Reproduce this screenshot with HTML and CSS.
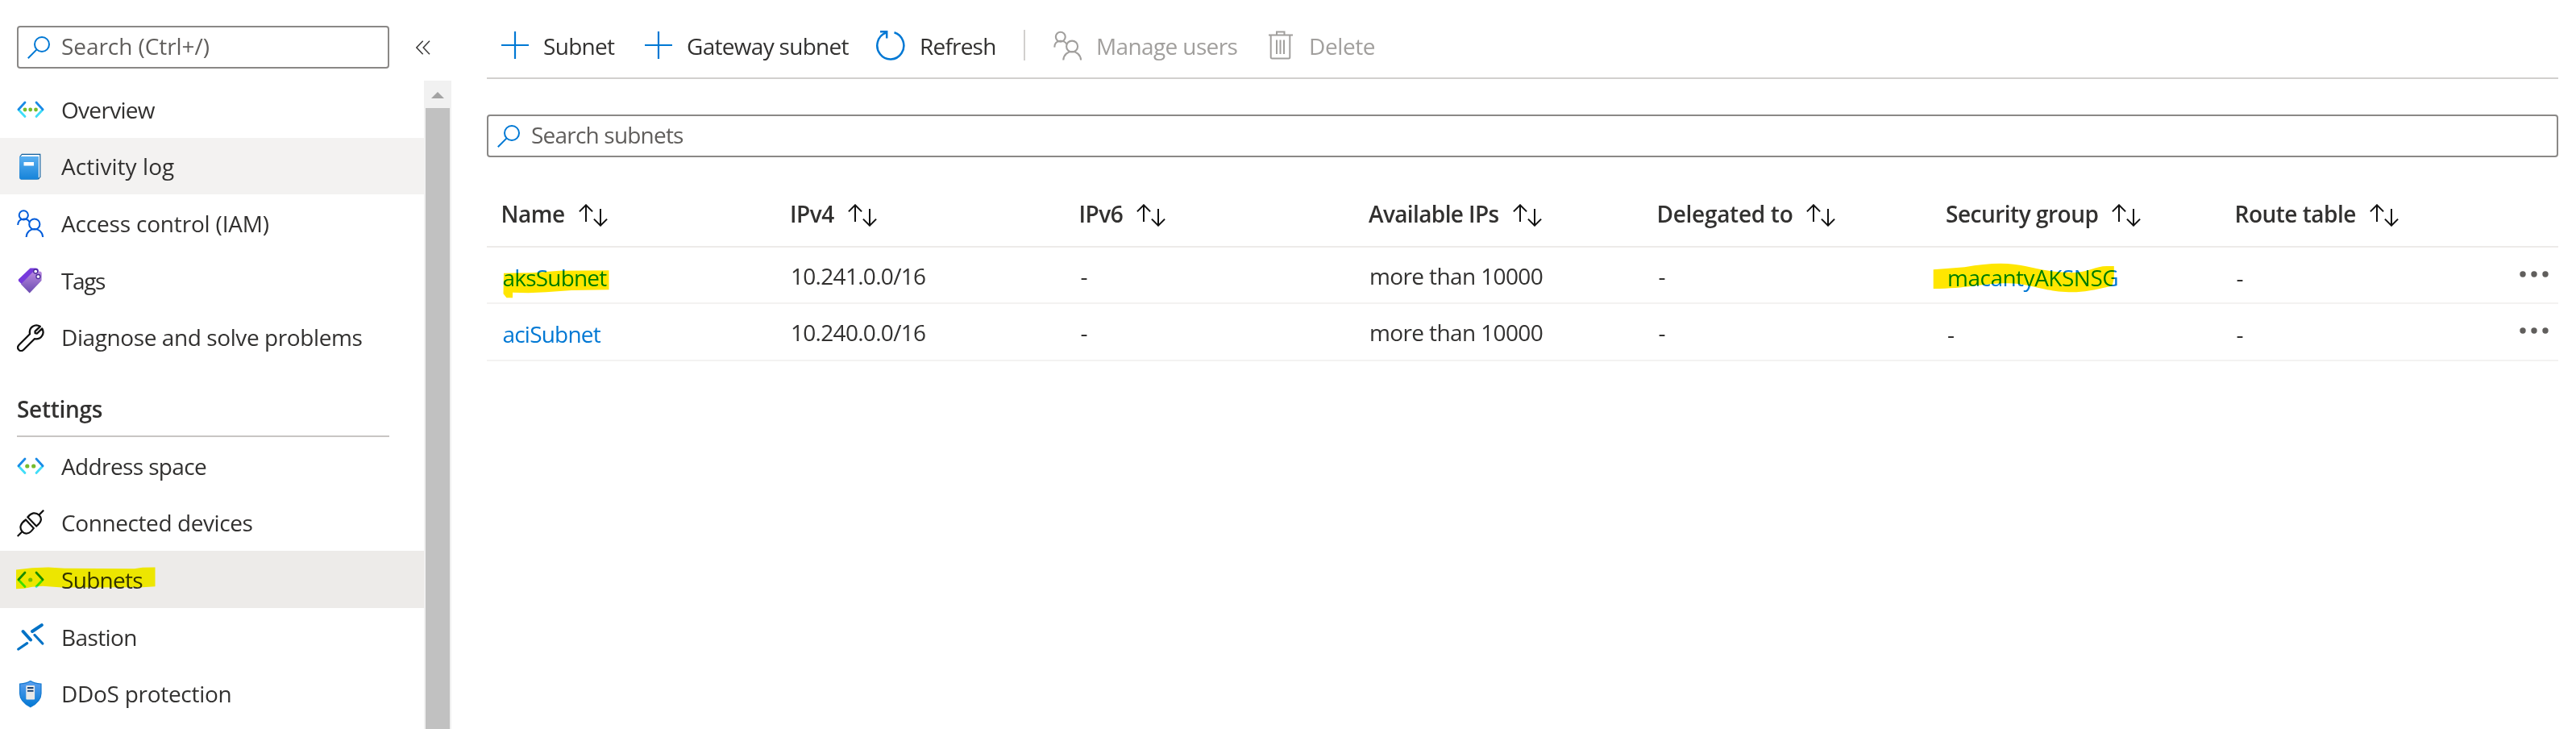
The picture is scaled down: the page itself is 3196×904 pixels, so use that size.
FILE: index.html
```
<!DOCTYPE html>
<html lang="en">
<head>
<meta charset="utf-8">
<title>Subnets</title>
<link rel="stylesheet" href="styles.css">
</head>
<body>
<svg class="defs" width="0" height="0">
  <defs>
    <linearGradient id="g-book" x1="0" y1="0" x2="0" y2="1"><stop offset="0" stop-color="#5ab0f2"/><stop offset="1" stop-color="#1683d9"/></linearGradient>
    <linearGradient id="g-tag" x1="0" y1="0" x2="0" y2="1"><stop offset="0" stop-color="#b98ae0"/><stop offset="1" stop-color="#6b4bb0"/></linearGradient>
    <linearGradient id="g-shield" x1="0" y1="0" x2="0" y2="1"><stop offset="0" stop-color="#5ea0ef"/><stop offset="1" stop-color="#0078d4"/></linearGradient>
    <symbol id="i-search" viewBox="0 0 28 28"><g fill="none" stroke="#0078d4" stroke-width="2"><circle cx="18" cy="10" r="9"/><path d="M11.6 16.4 .8 27.2"/></g></symbol>
    <symbol id="i-people" viewBox="0 0 34 34"><g fill="none" stroke="currentColor" stroke-width="2"><circle cx="8.3" cy="6.8" r="5.6"/><circle cx="21.8" cy="18" r="6.6"/><path d="M1.2 19C1.4 9.900 13 9.500 15.800 15.800M11.600 34C12.400 20.800 31.200 20.800 32.200 34"/></g></symbol>
    <symbol id="i-plus" viewBox="0 0 34 34"><path d="M17 0V34M0 17H34" fill="none" stroke="#0078d4" stroke-width="2.2"/></symbol>
    <symbol id="i-sort" viewBox="0 0 36 28"><g fill="none" stroke="#111" stroke-width="2"><path d="M9 22V1.500M.9 9.400 9 1.300l8.100 8.100M27 6v20.500M18.900 18.600 27 26.700l8.100-8.100"/></g></symbol>
    <symbol id="i-dots" viewBox="0 0 36 8"><g fill="#605e5c"><circle cx="4" cy="4" r="3.700"/><circle cx="18" cy="4" r="3.700"/><circle cx="32" cy="4" r="3.700"/></g></symbol>
    <symbol id="i-chev" viewBox="0 0 34 34"><g fill="none" stroke-width="2.800" stroke-linecap="round"><path stroke="#40ddf8" d="M2 17 10 25.500M32 17 24 25.500"/><path stroke="#1a8ae6" d="M10 8 2 16.700M24 8 32 16.700"/></g></symbol>
  </defs>
</svg>
<div class="app">
  <aside class="side">
    <div class="side-top">
      <div class="search search-menu"><svg width="28" height="28"><use href="#i-search"/></svg><span class="tr-0">Search (Ctrl+/)</span></div>
      <svg class="collapse" width="18" height="18" viewBox="0 0 18 18"><path d="M8.700.7.900 9l7.800 8.300M17 .7 9.200 9l7.800 8.300" fill="none" stroke="#3b3a39" stroke-width="1.500"/></svg>
    </div>
    <div class="side-body">
      <nav class="nav">
        <a class="item"><svg class="ic" viewBox="0 0 34 34"><use href="#i-chev"/><g fill="#76bc2d"><circle cx="10" cy="17" r="2.400"/><circle cx="16.700" cy="17" r="2.400"/><circle cx="23.500" cy="17" r="2.400"/></g></svg><span class="tr-7">Overview</span></a>
        <a class="item hover"><svg class="ic" viewBox="0 0 34 34"><path d="M6 .700H29.400V29.500L27 32.500H5L3.300 30V4Z" fill="#0f5f9e"/><path d="M6.500 2H28.200V29.500L26.500 31V4H4.500Z" fill="#fff"/><path d="M3.200 4H26.600V30.500a2 2 0 0 1-2 2H5a1.800 1.800 0 0 1-1.800-1.800Z" fill="url(#g-book)"/><path d="M8.500 11h12.500v4.500H8.500Z" fill="#fff"/></svg><span class="tr-up">Activity log</span></a>
        <a class="item"><svg class="ic people"><use href="#i-people"/></svg><span class="tr-1">Access control (IAM)</span></a>
        <a class="item"><svg class="ic" viewBox="0 0 34 34"><path d="M16.500 1.500H23a4 4 0 0 1 4 4V12L7.500 23 2 17.500 1.800 15.500Z" fill="#773adc"/><path d="M19.500 6.500 28 5.500a2.500 2.500 0 0 1 2.800 2.500L30.500 17 15.700 32.500 5 21.500Z" fill="url(#g-tag)"/><g fill="#fff" stroke="#4b2a9a" stroke-width="1.300"><circle cx="23.200" cy="5.500" r="2.500"/><circle cx="26.400" cy="12" r="2.500"/></g></svg><span class="tags">Tags</span></a>
        <a class="item"><svg class="ic" viewBox="0 0 34 34"><path d="M28.800 2.800C23 -.700 14.500 3 16 12.200L2.500 25.700C-1.500 30.500 4.500 35.800 8.500 31.500L21.800 18.200C30 19.500 35 11.500 31.200 5.400L25 11.500 22.600 11.200 22.500 8.900Z" fill="none" stroke="#111" stroke-width="2.300" stroke-linejoin="round"/></svg><span class="tr-4">Diagnose and solve problems</span></a>
        <h2 class="group"><span class="tr-3">Settings</span></h2>
        <a class="item"><svg class="ic" viewBox="0 0 34 34"><use href="#i-chev"/><g fill="#76bc2d"><circle cx="12.800" cy="17" r="2.600"/><circle cx="20.700" cy="17" r="2.600"/></g></svg><span class="tr-6">Address space</span></a>
        <a class="item"><svg class="ic" viewBox="0 0 34 34"><g fill="none" stroke="#111" stroke-width="2.200"><path d="M.700 33 7 26.700M33.200.700 26.800 7.100M11 12.500 20.800 23C16 30 10.500 31.500 6.500 27 2.500 22.500 4.500 17 11 12.500ZM13.400 9.200 24.200 20.500C30.500 15.500 31.500 11 27.500 6.800 23 2.500 17.500 4 13.400 9.200Z"/></g></svg><span class="tr-4">Connected devices</span></a>
        <a class="item current"><svg class="ic" viewBox="0 0 34 34"><use href="#i-chev"/><circle cx="16.700" cy="17" r="2.600" fill="#76bc2d"/></svg><span class="tr-7">Subnets</span>
          <svg class="mark mark-menu" width="174" height="28" viewBox="20 702.500 174 28"><path d="M20 706 40 703.700 60 703 80 704.300 166.700 704.700 176.700 703.300 192.500 703V726.700L176.700 727.700 76.700 728 53.300 726.300 40 727.300 30 729.300 20 729.700Z"/></svg></a>
        <a class="item"><svg class="ic" viewBox="0 0 34 34"><g stroke="#0072c6" stroke-linecap="round" stroke-width="4"><path d="M7.600 10 17 20.500M19 10 30.800 2.200"/><path stroke-width="3.200" d="M22 14.500 31.800 25M1.800 32 12.600 24.700"/></g></svg><span class="tr-6">Bastion</span></a>
        <a class="item"><svg class="ic" viewBox="0 0 34 34"><path d="M16.800.300C20 3 25 3.800 30 4V16C30 24 23 29.500 16.800 32.800 10.600 29.500 3.600 24 3.600 16V4C8.600 3.800 13.600 3 16.800.300Z" fill="url(#g-shield)" stroke="#1579d0" stroke-width="1.200"/><rect x="11.300" y="6" width="10.800" height="17.500" rx="1" fill="#e8e8e8"/><path d="M13 8h7.500v2H13ZM13 11.700h7.500v2H13Z" fill="#173f70"/></svg><span class="tr-3">DDoS protection</span></a>
      </nav>
      <div class="scroll"><div class="up"></div><div class="thumb"></div></div>
    </div>
  </aside>
  <main class="main">
    <div class="bar">
      <div class="cmd c-subnet"><svg width="34" height="34"><use href="#i-plus"/></svg><span class="tr-7">Subnet</span></div>
      <div class="cmd c-gateway"><svg width="34" height="34"><use href="#i-plus"/></svg><span class="tr-7">Gateway subnet</span></div>
      <div class="cmd c-refresh"><svg width="36" height="38" viewBox="0 0 36 38"><path d="M22.500 3.200A16.500 17 0 1 1 12 3.600M5 2.300h8.200V10.500" fill="none" stroke="#0078d4" stroke-width="2.500"/></svg><span class="tr-8">Refresh</span></div>
      <div class="sep"></div>
      <div class="cmd off c-users"><svg width="36" height="37"><use href="#i-people"/></svg><span class="tr-6">Manage users</span></div>
      <div class="cmd off"><svg width="30" height="36" viewBox="0 0 30 36"><path d="M0 5.500H30M10 5V1.500h9.500V5M2.700 6V33a1.500 1.500 0 0 0 1.500 1.500H24.800a1.500 1.500 0 0 0 1.500-1.500V6M10 11.500V29M14.500 11.500V29M19 11.500V29" fill="none" stroke="currentColor" stroke-width="2"/></svg><span class="tr-4">Delete</span></div>
    </div>
    <div class="search search-table"><svg width="28" height="28"><use href="#i-search"/></svg><span class="tr-8">Search subnets</span></div>
    <div class="row head">
      <div class="th"><span class="tr-5">Name</span><svg><use href="#i-sort"/></svg></div>
      <div class="th"><span class="tr-5">IPv4</span><svg><use href="#i-sort"/></svg></div>
      <div class="th"><span class="tr-5">IPv6</span><svg><use href="#i-sort"/></svg></div>
      <div class="th"><span class="tr-6">Available IPs</span><svg><use href="#i-sort"/></svg></div>
      <div class="th"><span class="tr-3">Delegated to</span><svg><use href="#i-sort"/></svg></div>
      <div class="th"><span class="tr-5">Security group</span><svg><use href="#i-sort"/></svg></div>
      <div class="th"><span class="tr-5">Route table</span><svg><use href="#i-sort"/></svg></div>
    </div>
    <div class="row first">
      <div class="td low link tr-8">aksSubnet<svg class="mark mark-name" width="132" height="35" viewBox="623.500 335 132 35"><path d="M624.500 338.700 661 338.300 693 335.700 755 335.300V359.300L708.600 360 677 362.300 655 363.300 635.500 362.700V369.300H628L624 364.300Z"/></svg></div>
      <div class="td tr-7">10.241.0.0/16</div>
      <div class="td dash">-</div>
      <div class="td tr-6">more than 10000</div>
      <div class="td dash">-</div>
      <div class="td low link tr-5">macantyAKSNSG<svg class="mark mark-group" width="226" height="37" viewBox="2398 326 226 37"><path d="M2398.700 334.300 2437.500 331.300Q2462 326.700 2482 326.700C2515 326.700 2530 338 2571.400 338 2590 338 2600 330 2614 330H2622.800V345L2620.500 354.300Q2590 362.300 2571.400 362.300C2535 362.300 2520 351.300 2491 351.300 2460 351.300 2440 358 2398.700 358Z"/></svg></div>
      <div class="td low dash">-</div>
      <div class="more"><svg width="36" height="8"><use href="#i-dots"/></svg></div>
    </div>
    <div class="row second">
      <div class="td low link tr-8">aciSubnet</div>
      <div class="td tr-7">10.240.0.0/16</div>
      <div class="td dash">-</div>
      <div class="td tr-6">more than 10000</div>
      <div class="td dash">-</div>
      <div class="td low dash">-</div>
      <div class="td low dash">-</div>
      <div class="more"><svg width="36" height="8"><use href="#i-dots"/></svg></div>
    </div>
  </main>
</div>
</body>
</html>
```
FILE: styles.css
```
* { box-sizing: border-box; }
body {
  margin: 0;
  background: #fff;
  color: #323130;
  font: 28px/38px "Open Sans", "Noto Sans", sans-serif;
  white-space: nowrap;
}
svg { display: block; flex: none; }
.defs { position: absolute; }
.app { display: flex; height: 904px; overflow: hidden; }

/* letter tracking steps */
.tr-up { letter-spacing: .06px; }
.tr-0 { letter-spacing: -.06px; }
.tr-1 { letter-spacing: -.18px; }
.tr-3 { letter-spacing: -.29px; }
.tr-4 { letter-spacing: -.41px; }
.tr-5 { letter-spacing: -.5px; }
.tr-6 { letter-spacing: -.62px; }
.tr-7 { letter-spacing: -.7px; }
.tr-8 { letter-spacing: -.8px; }

/* menu */
.side { width: 560px; flex: none; display: flex; flex-direction: column; }
.side-top { height: 100px; flex: none; display: flex; padding: 32px 0 0 21px; }
.search {
  display: flex;
  align-items: center;
  height: 53px;
  border: 2px solid #8a8886;
  border-radius: 4px;
  color: #605e5c;
}
.search span { padding-bottom: 3px; }
.search-menu { width: 462px; padding-left: 11px; gap: 14px; }
.collapse { margin: 18px 0 0 33px; }
.side-body { flex: 1; display: flex; min-height: 0; }
.nav { width: 526px; display: flex; flex-direction: column; }
.item {
  position: relative;
  flex: none;
  display: flex;
  align-items: center;
  gap: 21px;
  height: 70.6px;
  padding: 2px 0 0 21px;
}
.item span { padding-bottom: 1px; }
.item.hover { background: #f3f2f1; }
.item.current { background: #edebe9; }
.ic { width: 34px; height: 34px; }
.people { color: #015cda; }
.tags { letter-spacing: -1.4px; }
.group {
  flex: none;
  display: flex;
  align-items: flex-end;
  height: 89px;
  margin: 0 43px 0 21px;
  padding-bottom: 14px;
  border-bottom: 2px solid #c8c6c4;
  font-size: 28px;
  font-weight: 600;
}
.scroll { width: 34px; padding: 14px 2px 0; background: #f1f1f1; display: flex; flex-direction: column; align-items: center; }
.up { border: 8px solid transparent; border-top: 0; border-bottom-color: #a3a3a3; }
.thumb { flex: 1; width: 30px; margin-top: 12px; background: #c1c1c1; }

/* highlighter strokes */
.mark { position: absolute; fill: #ffe600; mix-blend-mode: darken; }
.mark-menu { left: 20px; top: 20px; }
.mark-name { left: 2px; top: 10px; }
.mark-group { left: -16px; top: 1px; }

/* content */
.main { flex: 1; padding: 0 22px 0 44px; }
.bar { display: flex; align-items: center; height: 98px; padding: 16px 0 0 18px; border-bottom: 2px solid #d2d0ce; }
.cmd { display: flex; align-items: center; gap: 18px; }
.cmd span { padding-top: 1px; }
.off { color: #a19f9d; }
.c-subnet { width: 178px; }
.c-gateway { width: 287px; }
.c-refresh { width: 183px; gap: 18px; }
.sep { width: 2px; height: 38px; background: #d2d0ce; margin-right: 35px; }
.c-users { width: 267px; gap: 17px; }
.cmd.off:last-child { gap: 20px; }
.search-table { margin-top: 44px; padding-left: 11px; gap: 14px; }

.row {
  display: grid;
  grid-template-columns: 358.5px 358.5px 359.5px 357.5px 358.5px 358.5px 330px 1fr;
  align-items: center;
  padding-left: 17.5px;
  border-bottom: 2px solid #f3f2f1;
}
.head { height: 112px; padding-top: 30px; border-color: #edebe9; font-weight: 600; }
.th { display: flex; align-items: center; gap: 17px; }
.th svg { width: 36px; height: 28px; margin-top: 4px; }
.first { height: 70px; padding-top: 1px; }
.second { height: 71px; }
.td { position: relative; padding-left: 1px; }
.low { top: 2px; }
.link { color: #0078d4; padding-left: 2px; }
.dash { padding-left: 2px; }
.more { display: flex; justify-content: flex-end; padding: 0 12px 3px 0; }
```
